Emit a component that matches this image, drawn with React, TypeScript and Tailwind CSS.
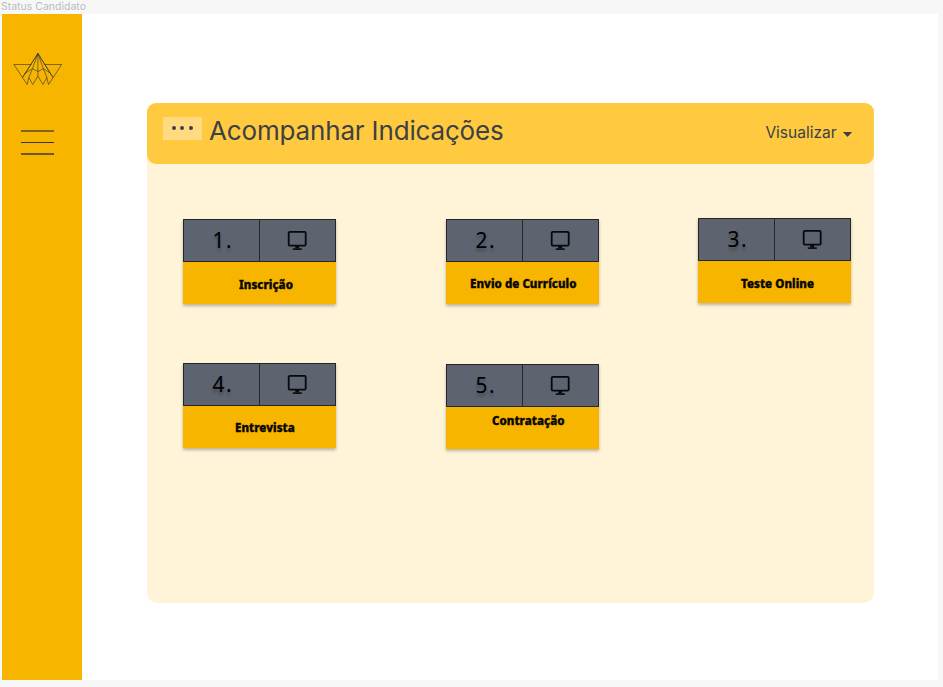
type Step = {
  number: string;
  label: string;
  card: string;
  text: string;
};

const firstRow: Step[] = [
  { number: '1.', label: 'Inscrição', card: '', text: 'left-[56px] top-[15px]' },
  { number: '2.', label: 'Envio de Currículo', card: 'ml-[110px]', text: 'left-[24px] top-[14px]' },
  { number: '3.', label: 'Teste Online', card: 'ml-[98.5px] -mt-px', text: 'left-[43.5px] top-[15px]' },
];

const secondRow: Step[] = [
  { number: '4.', label: 'Entrevista', card: '', text: 'left-[52px] top-[14px]' },
  { number: '5.', label: 'Contratação', card: 'ml-[110px] mt-[1px]', text: 'left-[46px] top-[6px]' },
];

function Monitor() {
  return (
    <svg className="-ml-px -mt-px h-5 w-5" viewBox="0 0 20 20" fill="none" stroke="#08090b">
      <rect x="1.7" y="1.9" width="17" height="13.7" rx="1.2" strokeWidth="1.8" />
      <path d="M5.8 19.1h9" strokeWidth="1.6" />
      <path d="M8.3 16h3.8v2.5H8.3z" fill="#08090b" stroke="none" />
    </svg>
  );
}

function StepCard({ step }: { step: Step }) {
  return (
    <div className={`h-[85px] w-[153px] shrink-0 bg-[#f8b500] shadow-[0_2px_3px_rgba(0,0,0,0.27)] ${step.card}`}>
      <div className="flex h-[42.5px] border border-[#24262a] bg-[#5d636f]">
        <div className="flex w-[76px] items-center justify-center border-r border-[#24262a] pb-[3px] pl-[3px] font-['Noto_Sans',sans-serif] text-[22px] leading-none font-normal text-black [text-shadow:0_3px_3px_rgba(0,0,0,0.25)]">
          <span className="scale-x-95 tracking-[1.5px]">{step.number}</span>
        </div>
        <div className="flex flex-1 items-center justify-center">
          <Monitor />
        </div>
      </div>
      <p className={`relative w-max font-['Noto_Sans',sans-serif] text-[11.5px] leading-4 font-extrabold tracking-[0.06px] text-[#090700] [-webkit-text-stroke:0.4px_#090700] ${step.text}`}>
        {step.label}
      </p>
    </div>
  );
}

function Logo() {
  return (
    <svg className="ml-[11px] mt-[38px] h-[35px] w-[50px]" viewBox="0 0 50 35" fill="none" stroke="#373936" strokeWidth="0.65" strokeLinejoin="round">
      <path d="M18.2 12.5H.8l13.4 20 1.6-7M31.6 12.5H48.7l-13.2 20-1.6-7" />
      <path d="M24.9 1.5L9.5 25.5M24.9 1.5l15.1 24M24.9 1.5L11.8 22M24.9 1.5l12.9 20.5" />
      <path d="M24.9 1.5v18M24.9 1.5l-5.4 15.2-3.7 8.8M24.9 1.5l5.4 15.2 3.6 8.8" />
      <path d="M9.5 25.5L12.4 21l7.1-4.3 5.4 2.8 5.4-2.8 6.9 4.3 2.8 4.5" />
      <path d="M15.8 25.5l4 7 5.1-8.5 5.1 8.5 3.9-7M24.9 19v5" />
    </svg>
  );
}

export default function App() {
  return (
    <div className="h-[687px] w-[943px] overflow-hidden bg-[#f7f7f7] font-['Inter',sans-serif]">
      <div className="h-[14px] pl-[1px] text-[10.5px] leading-[14px] text-[#bcbcbc]">Status Candidato</div>
      <div className="ml-[1.5px] flex h-[666px] w-[936px] bg-white">
        <aside className="h-full w-[80.5px] shrink-0 bg-[#f8b500]">
          <Logo />
          <div className="ml-[19.5px] mt-[43px] flex w-[33px] flex-col">
            <span className="h-[2px] bg-[#7c6422]" />
            <span className="mt-[10px] h-[1px] bg-[#373936]" />
            <span className="mt-[10px] h-[2px] bg-[#6c5823]" />
          </div>
        </aside>
        <main className="ml-[65px] mt-[89px] h-[500px] w-[726.5px] rounded-[10px] bg-[#fff4d8]">
          <header className="flex h-[60.5px] items-start rounded-[9px] bg-[#ffca40] text-[#3d4144]">
            <div className="ml-[16px] mt-[14px] flex h-[23px] w-[38.5px] items-center justify-center gap-[4.6px] bg-[#ffda80]">
              <i className="mb-px h-1 w-1 rounded-full bg-[#3d4144]" />
              <i className="mb-px h-1 w-1 rounded-full bg-[#3d4144]" />
              <i className="mb-px h-1 w-1 rounded-full bg-[#3d4144]" />
            </div>
            <h1 className="ml-[7.5px] mt-[12px] text-[26px] leading-8 tracking-[-0.16px]">Acompanhar Indicações</h1>
            <button className="mr-[21.5px] ml-auto mt-[18px] flex items-center text-[15.5px] leading-6">
              Visualizar
              <svg className="ml-[6.5px] mt-[2px] h-[5px] w-[9px]" viewBox="0 0 9 5" fill="currentColor">
                <path d="M.5 0h8q.6.1.2.6L5 4.5q-.5.5-1 0L.3.6Q0 0 .5 0z" />
              </svg>
            </button>
          </header>
          <section className="flex items-start pl-[36px] pt-[55.5px]">
            {firstRow.map((step) => <StepCard key={step.number} step={step} />)}
          </section>
          <section className="flex items-start pl-[36px] pt-[59px]">
            {secondRow.map((step) => <StepCard key={step.number} step={step} />)}
          </section>
        </main>
      </div>
    </div>
  );
}
